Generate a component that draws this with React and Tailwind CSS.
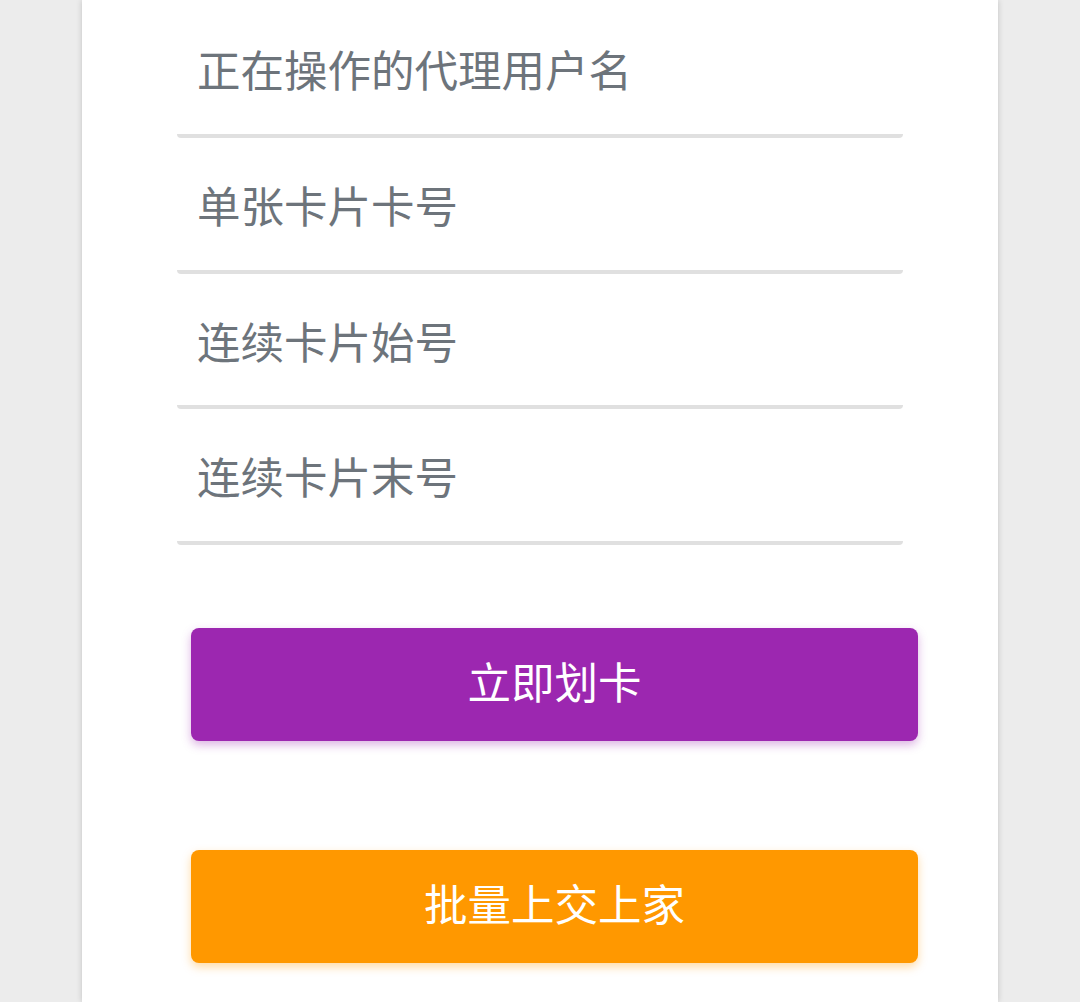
export default function App() {
  const fields = ["正在操作的代理用户名", "单张卡片卡号", "连续卡片始号", "连续卡片末号"];
  return (
    <div className="min-h-[1002px] h-[1002px] overflow-hidden bg-[#ececec] flex justify-center" style={{ fontFamily: '"Noto Sans CJK SC", "Noto Sans", sans-serif' }}>
      <div className="w-[916px] h-full bg-white shadow-[0_0_6px_rgba(0,0,0,0.18)] pt-[2.33px]">
        <div className="px-[95px]">
          {fields.map((f) => (
            <div
              key={f}
              className="h-[135.67px] flex items-center pl-[20px] pt-[2px] border-b-4 border-[#e0e0e0] rounded-b-[4px] text-[43.5px] leading-none text-[#6d747b]"
            >
              {f}
            </div>
          ))}
        </div>
        <div className="pl-[109px] pr-[80px] mt-[83px] flex flex-col gap-[109px]">
          <button className="h-[113px] w-full pb-[8px] rounded-[8px] bg-[#9c27b0] text-white text-[43.5px] leading-none shadow-[0_4px_10px_rgba(156,39,176,0.35)]">
            立即划卡
          </button>
          <button className="h-[113px] w-full pb-[8px] rounded-[8px] bg-[#ff9800] text-white text-[43.5px] leading-none shadow-[0_4px_10px_rgba(255,152,0,0.35)]">
            批量上交上家
          </button>
        </div>
      </div>
    </div>
  );
}
